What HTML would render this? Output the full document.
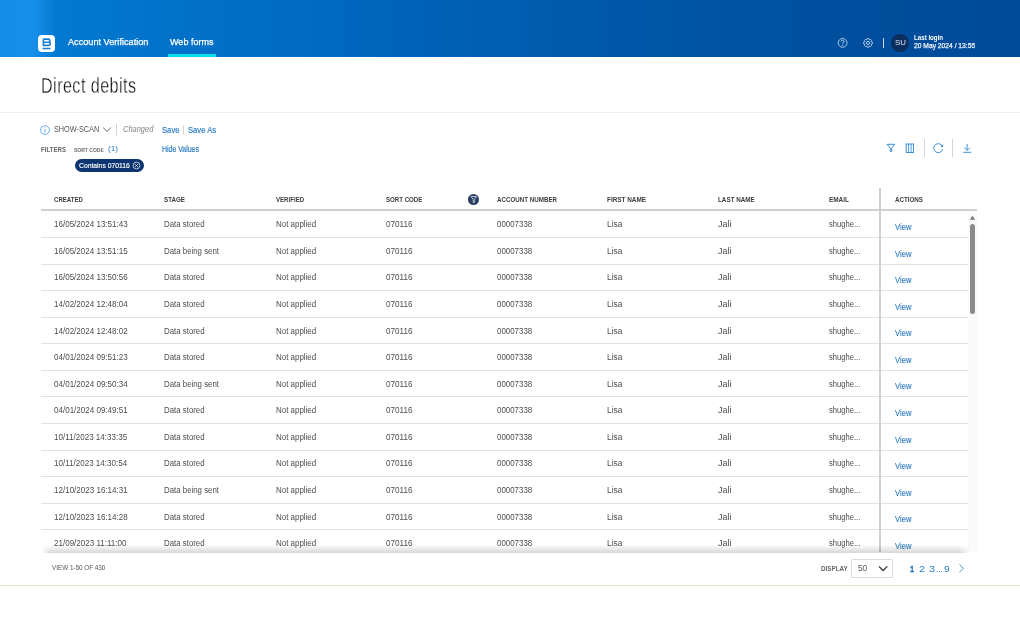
<!DOCTYPE html>
<html><head><meta charset="utf-8">
<style>
*{margin:0;padding:0;box-sizing:border-box}
html,body{width:1020px;height:638px;overflow:hidden;background:#fff;font-family:"Liberation Sans",sans-serif}
.a{position:absolute}
.t{position:absolute;white-space:nowrap;line-height:1;transform-origin:0 0}
#hdr{position:absolute;left:0;top:0;width:1020px;height:56.8px;
 background:linear-gradient(90deg,#148ce8 0px,#178fea 33px,#0479d1 56px,#0275cc 120px,#0068c0 330px,#0058a8 600px,#004e9e 850px,#004a98 1020px)}
#logo{position:absolute;left:37.5px;top:34.5px;width:17.1px;height:17.1px;background:#fff;border-radius:4px}
#ul{position:absolute;left:168.1px;top:53.9px;width:48px;height:2.9px;background:#06dfee}
#div1{position:absolute;left:0;top:112px;width:1020px;height:1px;background:#f0f0f0}
</style></head><body>
<div id="hdr">
 <div id="logo"><svg width="17.1" height="17.1" viewBox="0 0 17 17"><path d="M5.35 4.1H10.3A1.55 1.55 0 0 1 10.3 7.2H5.35M5.35 7.2H10.75A1.55 1.55 0 0 1 10.75 10.3H5.35V4.1" fill="none" stroke="#1a7fd8" stroke-width="1.6"/><rect x="4.5" y="12.7" width="8" height="1.5" fill="#1a7fd8"/></svg></div>
 <span class="t" style="left:68.36px;top:37.47px;font-size:9.6px;color:#fff;font-weight:normal;font-style:normal;transform:scaleX(0.954);-webkit-text-stroke:0.25px #fff">Account Verification</span>
 <span class="t" style="left:170.07px;top:37.29px;font-size:9.7px;color:#fff;font-weight:normal;font-style:normal;transform:scaleX(0.933);-webkit-text-stroke:0.25px #fff">Web forms</span>
 <div id="ul"></div>
 <svg class="a" style="left:836px;top:36px" width="14" height="14" viewBox="0 0 14 14"><circle cx="6.6" cy="6.9" r="4.4" fill="none" stroke="#c4d8f0" stroke-width="0.9"/><path d="M5.2 5.6A1.45 1.45 0 1 1 7.3 6.9C6.8 7.2 6.6 7.5 6.6 8.2" fill="none" stroke="#c4d8f0" stroke-width="0.9"/><circle cx="6.6" cy="9.5" r="0.55" fill="#c4d8f0"/></svg>
 <svg class="a" style="left:861px;top:36px" width="14" height="14" viewBox="0 0 14 14"><path d="M5.69 3.65 L6.16 2.58 L7.84 2.58 L8.31 3.65 L8.37 3.68 L9.46 3.25 L10.65 4.44 L10.22 5.53 L10.25 5.59 L11.32 6.06 L11.32 7.74 L10.25 8.21 L10.22 8.27 L10.65 9.36 L9.46 10.55 L8.37 10.12 L8.31 10.15 L7.84 11.22 L6.16 11.22 L5.69 10.15 L5.63 10.12 L4.54 10.55 L3.35 9.36 L3.78 8.27 L3.75 8.21 L2.68 7.74 L2.68 6.06 L3.75 5.59 L3.78 5.53 L3.35 4.44 L4.54 3.25 L5.63 3.68Z" fill="none" stroke="#c4d8f0" stroke-width="0.9" stroke-linejoin="round"/><circle cx="7" cy="6.9" r="1.6" fill="none" stroke="#c4d8f0" stroke-width="0.95"/></svg>
 <div class="a" style="left:882.5px;top:38.3px;width:0.9px;height:9.4px;background:#c4d8f0"></div>
 <div class="a" style="left:891.1px;top:33.7px;width:17.9px;height:17.9px;border-radius:50%;background:#0b2e5e"></div>
 <span class="t" style="left:894.89px;top:38.80px;font-size:7.8px;color:#dbe3ef;font-weight:normal;font-style:normal;transform:scaleX(1.015);">SU</span>
 <span class="t" style="left:913.75px;top:35.06px;font-size:6.9px;color:#fff;font-weight:bold;font-style:normal;transform:scaleX(0.895);">Last login</span>
 <span class="t" style="left:913.74px;top:42.22px;font-size:7.3px;color:#f2f6fb;font-weight:normal;font-style:normal;transform:scaleX(0.919);-webkit-text-stroke:0.25px #f2f6fb">20 May 2024 / 13:55</span>
</div>
<span class="t" style="left:40.83px;top:74.98px;font-size:22.0px;color:#111;font-weight:normal;font-style:normal;transform:scaleX(0.734);-webkit-text-stroke:0.35px #fff;letter-spacing:0.6px">Direct debits</span>
<div id="div1"></div>

<!-- toolbar -->
<svg class="a" style="left:39px;top:124px" width="12" height="12" viewBox="0 0 12 12"><circle cx="6" cy="6" r="4.4" fill="none" stroke="#5aa9ee" stroke-width="0.9"/><rect x="5.55" y="5" width="0.9" height="3.6" fill="#5aa9ee"/><circle cx="6" cy="3.7" r="0.55" fill="#5aa9ee"/></svg>
<span class="t" style="left:53.66px;top:125.17px;font-size:8.3px;color:#555;font-weight:normal;font-style:normal;transform:scaleX(0.878);">SHOW-SCAN</span>
<svg class="a" style="left:102px;top:126px" width="10" height="7" viewBox="0 0 10 7"><path d="M1.1 1.6L5 5.4 8.9 1.6" fill="none" stroke="#555" stroke-width="0.9"/></svg>
<div class="a" style="left:116.1px;top:123.9px;width:0.7px;height:11.7px;background:#d5d5d5"></div>
<span class="t" style="left:122.67px;top:124.92px;font-size:8.6px;color:#858585;font-weight:normal;font-style:italic;transform:scaleX(0.869);">Changed</span>
<span class="t" style="left:161.51px;top:125.12px;font-size:9.9px;color:#2f7cc4;font-weight:normal;font-style:normal;transform:scaleX(0.777);-webkit-text-stroke:0.2px #2f7cc4">Save</span>
<div class="a" style="left:183.2px;top:125px;width:0.7px;height:10px;background:#d5d5d5"></div>
<span class="t" style="left:188.01px;top:125.12px;font-size:9.9px;color:#2f7cc4;font-weight:normal;font-style:normal;transform:scaleX(0.775);-webkit-text-stroke:0.2px #2f7cc4">Save As</span>
<span class="t" style="left:40.86px;top:145.67px;font-size:7.0px;color:#666;font-weight:bold;font-style:normal;transform:scaleX(0.871);">FILTERS</span>
<span class="t" style="left:73.99px;top:146.54px;font-size:6.1px;color:#6a6a6a;font-weight:bold;font-style:normal;transform:scaleX(0.822);">SORT CODE</span>
<span class="t" style="left:108.05px;top:144.57px;font-size:7.6px;color:#2f7cc4;font-weight:normal;font-style:normal;transform:scaleX(1.091);">(1)</span>
<span class="t" style="left:161.88px;top:144.59px;font-size:8.4px;color:#2f7cc4;font-weight:normal;font-style:normal;transform:scaleX(0.830);-webkit-text-stroke:0.2px #2f7cc4">Hide Values</span>
<div class="a" style="left:74.6px;top:158.6px;width:69.5px;height:13.3px;border-radius:7px;background:#0b3470"></div>
<span class="t" style="left:78.53px;top:161.82px;font-size:7.3px;color:#fff;font-weight:normal;font-style:normal;transform:scaleX(0.930);-webkit-text-stroke:0.15px #fff">Contains 070116</span>
<svg class="a" style="left:132px;top:161.3px" width="9" height="9" viewBox="0 0 9 9"><circle cx="4.5" cy="4.5" r="3.4" fill="none" stroke="#fff" stroke-width="0.7"/><path d="M3.1 3.1L5.9 5.9M5.9 3.1L3.1 5.9" stroke="#fff" stroke-width="0.7"/></svg>

<!-- right icons -->
<svg class="a" style="left:884px;top:141px" width="14" height="14" viewBox="0 0 14 14"><path d="M3 3.3H10.7L7.7 7.2V10.6L6.3 10.6V7.2Z" fill="none" stroke="#3b8fd6" stroke-width="1" stroke-linejoin="round"/></svg>
<svg class="a" style="left:903px;top:141px" width="14" height="14" viewBox="0 0 14 14"><rect x="3.2" y="3" width="7.3" height="8.5" fill="none" stroke="#3b8fd6" stroke-width="1"/><path d="M5.6 3V11.5M8.1 3V11.5" stroke="#3b8fd6" stroke-width="0.9"/></svg>
<div class="a" style="left:923.6px;top:138.9px;width:0.9px;height:18.5px;background:#d6d6d6"></div>
<svg class="a" style="left:931px;top:141px" width="14" height="14" viewBox="0 0 14 14"><path d="M11.4 5.4A4.5 4.5 0 1 0 11.6 8.4" fill="none" stroke="#3b8fd6" stroke-width="1"/><path d="M12.2 3.6L11.9 6.6 9.4 5.2Z" fill="#3b8fd6"/></svg>
<div class="a" style="left:952px;top:138.9px;width:0.9px;height:18.5px;background:#d6d6d6"></div>
<svg class="a" style="left:960px;top:141px" width="14" height="14" viewBox="0 0 14 14"><path d="M7.1 3V9.3M4.3 6.6L7.1 9.4 9.9 6.6M3.2 11.3H11.2" fill="none" stroke="#3b8fd6" stroke-width="1"/></svg>

<!-- table -->
<div class="a" style="left:41px;top:208.7px;width:936px;height:2.4px;background:#cfcfcf"></div>
<span class="t" style="left:53.90px;top:195.65px;font-size:7.5px;color:#3d3d3d;font-weight:bold;font-style:normal;transform:scaleX(0.809);">CREATED</span><span class="t" style="left:164.49px;top:195.65px;font-size:7.5px;color:#3d3d3d;font-weight:bold;font-style:normal;transform:scaleX(0.832);">STAGE</span><span class="t" style="left:275.70px;top:195.65px;font-size:7.5px;color:#3d3d3d;font-weight:bold;font-style:normal;transform:scaleX(0.812);">VERIFIED</span><span class="t" style="left:386.00px;top:195.65px;font-size:7.5px;color:#3d3d3d;font-weight:bold;font-style:normal;transform:scaleX(0.814);">SORT CODE</span><span class="t" style="left:496.59px;top:195.65px;font-size:7.5px;color:#3d3d3d;font-weight:bold;font-style:normal;transform:scaleX(0.829);">ACCOUNT NUMBER</span><span class="t" style="left:607.17px;top:195.65px;font-size:7.5px;color:#3d3d3d;font-weight:bold;font-style:normal;transform:scaleX(0.851);">FIRST NAME</span><span class="t" style="left:718.38px;top:195.65px;font-size:7.5px;color:#3d3d3d;font-weight:bold;font-style:normal;transform:scaleX(0.842);">LAST NAME</span><span class="t" style="left:828.97px;top:195.65px;font-size:7.5px;color:#3d3d3d;font-weight:bold;font-style:normal;transform:scaleX(0.853);">EMAIL</span><span class="t" style="left:895.29px;top:195.65px;font-size:7.5px;color:#3d3d3d;font-weight:bold;font-style:normal;transform:scaleX(0.830);">ACTIONS</span>
<div class="a" style="left:468.2px;top:194.1px;width:11.1px;height:11.1px;border-radius:50%;background:#2a3d63"></div>
<svg class="a" style="left:468.2px;top:194.1px" width="11.1" height="11.1" viewBox="0 0 11 11"><path d="M3 2.5H8.6L6.3 5.3V8.5H5.2V5.3Z" fill="none" stroke="#c8cedb" stroke-width="0.9" stroke-linejoin="round"/></svg>
<div class="a" style="left:0;top:0;width:1020px;height:638px;overflow:hidden;clip-path:inset(211px 0 86.5px 0)">
<span class="t" style="left:53.69px;top:220.20px;font-size:8.5px;color:#4d4d4d;font-weight:normal;font-style:normal;transform:scaleX(0.945);">16/05/2024 13:51:43</span>
<span class="t" style="left:164.31px;top:220.20px;font-size:8.5px;color:#4d4d4d;font-weight:normal;font-style:normal;transform:scaleX(0.924);">Data stored</span>
<span class="t" style="left:275.70px;top:220.20px;font-size:8.5px;color:#4d4d4d;font-weight:normal;font-style:normal;transform:scaleX(0.934);">Not applied</span>
<span class="t" style="left:386.36px;top:220.20px;font-size:8.5px;color:#4d4d4d;font-weight:normal;font-style:normal;transform:scaleX(0.956);">070116</span>
<span class="t" style="left:496.87px;top:220.20px;font-size:8.5px;color:#4d4d4d;font-weight:normal;font-style:normal;transform:scaleX(0.932);">00007338</span>
<span class="t" style="left:607.06px;top:220.20px;font-size:8.5px;color:#4d4d4d;font-weight:normal;font-style:normal;transform:scaleX(0.983);">Lisa</span>
<span class="t" style="left:717.94px;top:220.20px;font-size:8.5px;color:#4d4d4d;font-weight:normal;font-style:normal;transform:scaleX(1.058);">Jali</span>
<span class="t" style="left:829.18px;top:220.20px;font-size:8.5px;color:#4d4d4d;font-weight:normal;font-style:normal;transform:scaleX(0.894);">shughe...</span>
<span class="t" style="left:894.90px;top:221.97px;font-size:9.6px;color:#2f7cc4;font-weight:normal;font-style:normal;transform:scaleX(0.795);-webkit-text-stroke:0.15px #2f7cc4">View</span>
<div class="a" style="left:41px;top:237.00px;width:927px;height:1px;background:#e2e2e2"></div>
<span class="t" style="left:53.69px;top:246.78px;font-size:8.5px;color:#4d4d4d;font-weight:normal;font-style:normal;transform:scaleX(0.945);">16/05/2024 13:51:15</span>
<span class="t" style="left:164.31px;top:246.78px;font-size:8.5px;color:#4d4d4d;font-weight:normal;font-style:normal;transform:scaleX(0.924);">Data being sent</span>
<span class="t" style="left:275.70px;top:246.78px;font-size:8.5px;color:#4d4d4d;font-weight:normal;font-style:normal;transform:scaleX(0.934);">Not applied</span>
<span class="t" style="left:386.36px;top:246.78px;font-size:8.5px;color:#4d4d4d;font-weight:normal;font-style:normal;transform:scaleX(0.956);">070116</span>
<span class="t" style="left:496.87px;top:246.78px;font-size:8.5px;color:#4d4d4d;font-weight:normal;font-style:normal;transform:scaleX(0.932);">00007338</span>
<span class="t" style="left:607.06px;top:246.78px;font-size:8.5px;color:#4d4d4d;font-weight:normal;font-style:normal;transform:scaleX(0.983);">Lisa</span>
<span class="t" style="left:717.94px;top:246.78px;font-size:8.5px;color:#4d4d4d;font-weight:normal;font-style:normal;transform:scaleX(1.058);">Jali</span>
<span class="t" style="left:829.18px;top:246.78px;font-size:8.5px;color:#4d4d4d;font-weight:normal;font-style:normal;transform:scaleX(0.894);">shughe...</span>
<span class="t" style="left:894.90px;top:248.55px;font-size:9.6px;color:#2f7cc4;font-weight:normal;font-style:normal;transform:scaleX(0.795);-webkit-text-stroke:0.15px #2f7cc4">View</span>
<div class="a" style="left:41px;top:263.58px;width:927px;height:1px;background:#e2e2e2"></div>
<span class="t" style="left:53.69px;top:273.36px;font-size:8.5px;color:#4d4d4d;font-weight:normal;font-style:normal;transform:scaleX(0.945);">16/05/2024 13:50:56</span>
<span class="t" style="left:164.31px;top:273.36px;font-size:8.5px;color:#4d4d4d;font-weight:normal;font-style:normal;transform:scaleX(0.924);">Data stored</span>
<span class="t" style="left:275.70px;top:273.36px;font-size:8.5px;color:#4d4d4d;font-weight:normal;font-style:normal;transform:scaleX(0.934);">Not applied</span>
<span class="t" style="left:386.36px;top:273.36px;font-size:8.5px;color:#4d4d4d;font-weight:normal;font-style:normal;transform:scaleX(0.956);">070116</span>
<span class="t" style="left:496.87px;top:273.36px;font-size:8.5px;color:#4d4d4d;font-weight:normal;font-style:normal;transform:scaleX(0.932);">00007338</span>
<span class="t" style="left:607.06px;top:273.36px;font-size:8.5px;color:#4d4d4d;font-weight:normal;font-style:normal;transform:scaleX(0.983);">Lisa</span>
<span class="t" style="left:717.94px;top:273.36px;font-size:8.5px;color:#4d4d4d;font-weight:normal;font-style:normal;transform:scaleX(1.058);">Jali</span>
<span class="t" style="left:829.18px;top:273.36px;font-size:8.5px;color:#4d4d4d;font-weight:normal;font-style:normal;transform:scaleX(0.894);">shughe...</span>
<span class="t" style="left:894.90px;top:275.13px;font-size:9.6px;color:#2f7cc4;font-weight:normal;font-style:normal;transform:scaleX(0.795);-webkit-text-stroke:0.15px #2f7cc4">View</span>
<div class="a" style="left:41px;top:290.16px;width:927px;height:1px;background:#e2e2e2"></div>
<span class="t" style="left:53.69px;top:299.94px;font-size:8.5px;color:#4d4d4d;font-weight:normal;font-style:normal;transform:scaleX(0.945);">14/02/2024 12:48:04</span>
<span class="t" style="left:164.31px;top:299.94px;font-size:8.5px;color:#4d4d4d;font-weight:normal;font-style:normal;transform:scaleX(0.924);">Data stored</span>
<span class="t" style="left:275.70px;top:299.94px;font-size:8.5px;color:#4d4d4d;font-weight:normal;font-style:normal;transform:scaleX(0.934);">Not applied</span>
<span class="t" style="left:386.36px;top:299.94px;font-size:8.5px;color:#4d4d4d;font-weight:normal;font-style:normal;transform:scaleX(0.956);">070116</span>
<span class="t" style="left:496.87px;top:299.94px;font-size:8.5px;color:#4d4d4d;font-weight:normal;font-style:normal;transform:scaleX(0.932);">00007338</span>
<span class="t" style="left:607.06px;top:299.94px;font-size:8.5px;color:#4d4d4d;font-weight:normal;font-style:normal;transform:scaleX(0.983);">Lisa</span>
<span class="t" style="left:717.94px;top:299.94px;font-size:8.5px;color:#4d4d4d;font-weight:normal;font-style:normal;transform:scaleX(1.058);">Jali</span>
<span class="t" style="left:829.18px;top:299.94px;font-size:8.5px;color:#4d4d4d;font-weight:normal;font-style:normal;transform:scaleX(0.894);">shughe...</span>
<span class="t" style="left:894.90px;top:301.71px;font-size:9.6px;color:#2f7cc4;font-weight:normal;font-style:normal;transform:scaleX(0.795);-webkit-text-stroke:0.15px #2f7cc4">View</span>
<div class="a" style="left:41px;top:316.74px;width:927px;height:1px;background:#e2e2e2"></div>
<span class="t" style="left:53.69px;top:326.52px;font-size:8.5px;color:#4d4d4d;font-weight:normal;font-style:normal;transform:scaleX(0.945);">14/02/2024 12:48:02</span>
<span class="t" style="left:164.31px;top:326.52px;font-size:8.5px;color:#4d4d4d;font-weight:normal;font-style:normal;transform:scaleX(0.924);">Data stored</span>
<span class="t" style="left:275.70px;top:326.52px;font-size:8.5px;color:#4d4d4d;font-weight:normal;font-style:normal;transform:scaleX(0.934);">Not applied</span>
<span class="t" style="left:386.36px;top:326.52px;font-size:8.5px;color:#4d4d4d;font-weight:normal;font-style:normal;transform:scaleX(0.956);">070116</span>
<span class="t" style="left:496.87px;top:326.52px;font-size:8.5px;color:#4d4d4d;font-weight:normal;font-style:normal;transform:scaleX(0.932);">00007338</span>
<span class="t" style="left:607.06px;top:326.52px;font-size:8.5px;color:#4d4d4d;font-weight:normal;font-style:normal;transform:scaleX(0.983);">Lisa</span>
<span class="t" style="left:717.94px;top:326.52px;font-size:8.5px;color:#4d4d4d;font-weight:normal;font-style:normal;transform:scaleX(1.058);">Jali</span>
<span class="t" style="left:829.18px;top:326.52px;font-size:8.5px;color:#4d4d4d;font-weight:normal;font-style:normal;transform:scaleX(0.894);">shughe...</span>
<span class="t" style="left:894.90px;top:328.29px;font-size:9.6px;color:#2f7cc4;font-weight:normal;font-style:normal;transform:scaleX(0.795);-webkit-text-stroke:0.15px #2f7cc4">View</span>
<div class="a" style="left:41px;top:343.32px;width:927px;height:1px;background:#e2e2e2"></div>
<span class="t" style="left:53.69px;top:353.10px;font-size:8.5px;color:#4d4d4d;font-weight:normal;font-style:normal;transform:scaleX(0.945);">04/01/2024 09:51:23</span>
<span class="t" style="left:164.31px;top:353.10px;font-size:8.5px;color:#4d4d4d;font-weight:normal;font-style:normal;transform:scaleX(0.924);">Data stored</span>
<span class="t" style="left:275.70px;top:353.10px;font-size:8.5px;color:#4d4d4d;font-weight:normal;font-style:normal;transform:scaleX(0.934);">Not applied</span>
<span class="t" style="left:386.36px;top:353.10px;font-size:8.5px;color:#4d4d4d;font-weight:normal;font-style:normal;transform:scaleX(0.956);">070116</span>
<span class="t" style="left:496.87px;top:353.10px;font-size:8.5px;color:#4d4d4d;font-weight:normal;font-style:normal;transform:scaleX(0.932);">00007338</span>
<span class="t" style="left:607.06px;top:353.10px;font-size:8.5px;color:#4d4d4d;font-weight:normal;font-style:normal;transform:scaleX(0.983);">Lisa</span>
<span class="t" style="left:717.94px;top:353.10px;font-size:8.5px;color:#4d4d4d;font-weight:normal;font-style:normal;transform:scaleX(1.058);">Jali</span>
<span class="t" style="left:829.18px;top:353.10px;font-size:8.5px;color:#4d4d4d;font-weight:normal;font-style:normal;transform:scaleX(0.894);">shughe...</span>
<span class="t" style="left:894.90px;top:354.87px;font-size:9.6px;color:#2f7cc4;font-weight:normal;font-style:normal;transform:scaleX(0.795);-webkit-text-stroke:0.15px #2f7cc4">View</span>
<div class="a" style="left:41px;top:369.90px;width:927px;height:1px;background:#e2e2e2"></div>
<span class="t" style="left:53.69px;top:379.68px;font-size:8.5px;color:#4d4d4d;font-weight:normal;font-style:normal;transform:scaleX(0.945);">04/01/2024 09:50:34</span>
<span class="t" style="left:164.31px;top:379.68px;font-size:8.5px;color:#4d4d4d;font-weight:normal;font-style:normal;transform:scaleX(0.924);">Data being sent</span>
<span class="t" style="left:275.70px;top:379.68px;font-size:8.5px;color:#4d4d4d;font-weight:normal;font-style:normal;transform:scaleX(0.934);">Not applied</span>
<span class="t" style="left:386.36px;top:379.68px;font-size:8.5px;color:#4d4d4d;font-weight:normal;font-style:normal;transform:scaleX(0.956);">070116</span>
<span class="t" style="left:496.87px;top:379.68px;font-size:8.5px;color:#4d4d4d;font-weight:normal;font-style:normal;transform:scaleX(0.932);">00007338</span>
<span class="t" style="left:607.06px;top:379.68px;font-size:8.5px;color:#4d4d4d;font-weight:normal;font-style:normal;transform:scaleX(0.983);">Lisa</span>
<span class="t" style="left:717.94px;top:379.68px;font-size:8.5px;color:#4d4d4d;font-weight:normal;font-style:normal;transform:scaleX(1.058);">Jali</span>
<span class="t" style="left:829.18px;top:379.68px;font-size:8.5px;color:#4d4d4d;font-weight:normal;font-style:normal;transform:scaleX(0.894);">shughe...</span>
<span class="t" style="left:894.90px;top:381.45px;font-size:9.6px;color:#2f7cc4;font-weight:normal;font-style:normal;transform:scaleX(0.795);-webkit-text-stroke:0.15px #2f7cc4">View</span>
<div class="a" style="left:41px;top:396.48px;width:927px;height:1px;background:#e2e2e2"></div>
<span class="t" style="left:53.69px;top:406.26px;font-size:8.5px;color:#4d4d4d;font-weight:normal;font-style:normal;transform:scaleX(0.945);">04/01/2024 09:49:51</span>
<span class="t" style="left:164.31px;top:406.26px;font-size:8.5px;color:#4d4d4d;font-weight:normal;font-style:normal;transform:scaleX(0.924);">Data stored</span>
<span class="t" style="left:275.70px;top:406.26px;font-size:8.5px;color:#4d4d4d;font-weight:normal;font-style:normal;transform:scaleX(0.934);">Not applied</span>
<span class="t" style="left:386.36px;top:406.26px;font-size:8.5px;color:#4d4d4d;font-weight:normal;font-style:normal;transform:scaleX(0.956);">070116</span>
<span class="t" style="left:496.87px;top:406.26px;font-size:8.5px;color:#4d4d4d;font-weight:normal;font-style:normal;transform:scaleX(0.932);">00007338</span>
<span class="t" style="left:607.06px;top:406.26px;font-size:8.5px;color:#4d4d4d;font-weight:normal;font-style:normal;transform:scaleX(0.983);">Lisa</span>
<span class="t" style="left:717.94px;top:406.26px;font-size:8.5px;color:#4d4d4d;font-weight:normal;font-style:normal;transform:scaleX(1.058);">Jali</span>
<span class="t" style="left:829.18px;top:406.26px;font-size:8.5px;color:#4d4d4d;font-weight:normal;font-style:normal;transform:scaleX(0.894);">shughe...</span>
<span class="t" style="left:894.90px;top:408.03px;font-size:9.6px;color:#2f7cc4;font-weight:normal;font-style:normal;transform:scaleX(0.795);-webkit-text-stroke:0.15px #2f7cc4">View</span>
<div class="a" style="left:41px;top:423.06px;width:927px;height:1px;background:#e2e2e2"></div>
<span class="t" style="left:53.69px;top:432.84px;font-size:8.5px;color:#4d4d4d;font-weight:normal;font-style:normal;transform:scaleX(0.945);">10/11/2023 14:33:35</span>
<span class="t" style="left:164.31px;top:432.84px;font-size:8.5px;color:#4d4d4d;font-weight:normal;font-style:normal;transform:scaleX(0.924);">Data stored</span>
<span class="t" style="left:275.70px;top:432.84px;font-size:8.5px;color:#4d4d4d;font-weight:normal;font-style:normal;transform:scaleX(0.934);">Not applied</span>
<span class="t" style="left:386.36px;top:432.84px;font-size:8.5px;color:#4d4d4d;font-weight:normal;font-style:normal;transform:scaleX(0.956);">070116</span>
<span class="t" style="left:496.87px;top:432.84px;font-size:8.5px;color:#4d4d4d;font-weight:normal;font-style:normal;transform:scaleX(0.932);">00007338</span>
<span class="t" style="left:607.06px;top:432.84px;font-size:8.5px;color:#4d4d4d;font-weight:normal;font-style:normal;transform:scaleX(0.983);">Lisa</span>
<span class="t" style="left:717.94px;top:432.84px;font-size:8.5px;color:#4d4d4d;font-weight:normal;font-style:normal;transform:scaleX(1.058);">Jali</span>
<span class="t" style="left:829.18px;top:432.84px;font-size:8.5px;color:#4d4d4d;font-weight:normal;font-style:normal;transform:scaleX(0.894);">shughe...</span>
<span class="t" style="left:894.90px;top:434.61px;font-size:9.6px;color:#2f7cc4;font-weight:normal;font-style:normal;transform:scaleX(0.795);-webkit-text-stroke:0.15px #2f7cc4">View</span>
<div class="a" style="left:41px;top:449.64px;width:927px;height:1px;background:#e2e2e2"></div>
<span class="t" style="left:53.69px;top:459.42px;font-size:8.5px;color:#4d4d4d;font-weight:normal;font-style:normal;transform:scaleX(0.945);">10/11/2023 14:30:54</span>
<span class="t" style="left:164.31px;top:459.42px;font-size:8.5px;color:#4d4d4d;font-weight:normal;font-style:normal;transform:scaleX(0.924);">Data stored</span>
<span class="t" style="left:275.70px;top:459.42px;font-size:8.5px;color:#4d4d4d;font-weight:normal;font-style:normal;transform:scaleX(0.934);">Not applied</span>
<span class="t" style="left:386.36px;top:459.42px;font-size:8.5px;color:#4d4d4d;font-weight:normal;font-style:normal;transform:scaleX(0.956);">070116</span>
<span class="t" style="left:496.87px;top:459.42px;font-size:8.5px;color:#4d4d4d;font-weight:normal;font-style:normal;transform:scaleX(0.932);">00007338</span>
<span class="t" style="left:607.06px;top:459.42px;font-size:8.5px;color:#4d4d4d;font-weight:normal;font-style:normal;transform:scaleX(0.983);">Lisa</span>
<span class="t" style="left:717.94px;top:459.42px;font-size:8.5px;color:#4d4d4d;font-weight:normal;font-style:normal;transform:scaleX(1.058);">Jali</span>
<span class="t" style="left:829.18px;top:459.42px;font-size:8.5px;color:#4d4d4d;font-weight:normal;font-style:normal;transform:scaleX(0.894);">shughe...</span>
<span class="t" style="left:894.90px;top:461.19px;font-size:9.6px;color:#2f7cc4;font-weight:normal;font-style:normal;transform:scaleX(0.795);-webkit-text-stroke:0.15px #2f7cc4">View</span>
<div class="a" style="left:41px;top:476.22px;width:927px;height:1px;background:#e2e2e2"></div>
<span class="t" style="left:53.69px;top:486.00px;font-size:8.5px;color:#4d4d4d;font-weight:normal;font-style:normal;transform:scaleX(0.945);">12/10/2023 16:14:31</span>
<span class="t" style="left:164.31px;top:486.00px;font-size:8.5px;color:#4d4d4d;font-weight:normal;font-style:normal;transform:scaleX(0.924);">Data being sent</span>
<span class="t" style="left:275.70px;top:486.00px;font-size:8.5px;color:#4d4d4d;font-weight:normal;font-style:normal;transform:scaleX(0.934);">Not applied</span>
<span class="t" style="left:386.36px;top:486.00px;font-size:8.5px;color:#4d4d4d;font-weight:normal;font-style:normal;transform:scaleX(0.956);">070116</span>
<span class="t" style="left:496.87px;top:486.00px;font-size:8.5px;color:#4d4d4d;font-weight:normal;font-style:normal;transform:scaleX(0.932);">00007338</span>
<span class="t" style="left:607.06px;top:486.00px;font-size:8.5px;color:#4d4d4d;font-weight:normal;font-style:normal;transform:scaleX(0.983);">Lisa</span>
<span class="t" style="left:717.94px;top:486.00px;font-size:8.5px;color:#4d4d4d;font-weight:normal;font-style:normal;transform:scaleX(1.058);">Jali</span>
<span class="t" style="left:829.18px;top:486.00px;font-size:8.5px;color:#4d4d4d;font-weight:normal;font-style:normal;transform:scaleX(0.894);">shughe...</span>
<span class="t" style="left:894.90px;top:487.77px;font-size:9.6px;color:#2f7cc4;font-weight:normal;font-style:normal;transform:scaleX(0.795);-webkit-text-stroke:0.15px #2f7cc4">View</span>
<div class="a" style="left:41px;top:502.80px;width:927px;height:1px;background:#e2e2e2"></div>
<span class="t" style="left:53.69px;top:512.58px;font-size:8.5px;color:#4d4d4d;font-weight:normal;font-style:normal;transform:scaleX(0.945);">12/10/2023 16:14:28</span>
<span class="t" style="left:164.31px;top:512.58px;font-size:8.5px;color:#4d4d4d;font-weight:normal;font-style:normal;transform:scaleX(0.924);">Data stored</span>
<span class="t" style="left:275.70px;top:512.58px;font-size:8.5px;color:#4d4d4d;font-weight:normal;font-style:normal;transform:scaleX(0.934);">Not applied</span>
<span class="t" style="left:386.36px;top:512.58px;font-size:8.5px;color:#4d4d4d;font-weight:normal;font-style:normal;transform:scaleX(0.956);">070116</span>
<span class="t" style="left:496.87px;top:512.58px;font-size:8.5px;color:#4d4d4d;font-weight:normal;font-style:normal;transform:scaleX(0.932);">00007338</span>
<span class="t" style="left:607.06px;top:512.58px;font-size:8.5px;color:#4d4d4d;font-weight:normal;font-style:normal;transform:scaleX(0.983);">Lisa</span>
<span class="t" style="left:717.94px;top:512.58px;font-size:8.5px;color:#4d4d4d;font-weight:normal;font-style:normal;transform:scaleX(1.058);">Jali</span>
<span class="t" style="left:829.18px;top:512.58px;font-size:8.5px;color:#4d4d4d;font-weight:normal;font-style:normal;transform:scaleX(0.894);">shughe...</span>
<span class="t" style="left:894.90px;top:514.35px;font-size:9.6px;color:#2f7cc4;font-weight:normal;font-style:normal;transform:scaleX(0.795);-webkit-text-stroke:0.15px #2f7cc4">View</span>
<div class="a" style="left:41px;top:529.38px;width:927px;height:1px;background:#e2e2e2"></div>
<span class="t" style="left:53.69px;top:539.16px;font-size:8.5px;color:#4d4d4d;font-weight:normal;font-style:normal;transform:scaleX(0.945);">21/09/2023 11:11:00</span>
<span class="t" style="left:164.31px;top:539.16px;font-size:8.5px;color:#4d4d4d;font-weight:normal;font-style:normal;transform:scaleX(0.924);">Data stored</span>
<span class="t" style="left:275.70px;top:539.16px;font-size:8.5px;color:#4d4d4d;font-weight:normal;font-style:normal;transform:scaleX(0.934);">Not applied</span>
<span class="t" style="left:386.36px;top:539.16px;font-size:8.5px;color:#4d4d4d;font-weight:normal;font-style:normal;transform:scaleX(0.956);">070116</span>
<span class="t" style="left:496.87px;top:539.16px;font-size:8.5px;color:#4d4d4d;font-weight:normal;font-style:normal;transform:scaleX(0.932);">00007338</span>
<span class="t" style="left:607.06px;top:539.16px;font-size:8.5px;color:#4d4d4d;font-weight:normal;font-style:normal;transform:scaleX(0.983);">Lisa</span>
<span class="t" style="left:717.94px;top:539.16px;font-size:8.5px;color:#4d4d4d;font-weight:normal;font-style:normal;transform:scaleX(1.058);">Jali</span>
<span class="t" style="left:829.18px;top:539.16px;font-size:8.5px;color:#4d4d4d;font-weight:normal;font-style:normal;transform:scaleX(0.894);">shughe...</span>
<span class="t" style="left:894.90px;top:540.93px;font-size:9.6px;color:#2f7cc4;font-weight:normal;font-style:normal;transform:scaleX(0.795);-webkit-text-stroke:0.15px #2f7cc4">View</span>
<div class="a" style="left:41px;top:555.96px;width:927px;height:1px;background:#e2e2e2"></div>
</div>
<div class="a" style="left:879.4px;top:188.2px;width:2px;height:363.5px;background:#cfcfcf"></div>
<!-- scrollbar -->
<div class="a" style="left:968.4px;top:211px;width:8.5px;height:340.5px;background:#fafafa"></div>
<svg class="a" style="left:968px;top:214px" width="9" height="7" viewBox="0 0 9 7"><path d="M1.8 5.7L4.5 1.8 7.2 5.7Z" fill="#777"/></svg>
<div class="a" style="left:970px;top:224px;width:4.9px;height:89.8px;border-radius:2.5px;background:#8a8a8a"></div>
<!-- bottom shadow -->
<div class="a" style="left:41px;top:545.3px;width:930px;height:7.4px;background:linear-gradient(rgba(0,0,0,0),rgba(0,0,0,0.16));-webkit-mask-image:linear-gradient(90deg,transparent 0,#000 10px,#000 918px,transparent 930px)"></div>

<span class="t" style="left:52.00px;top:564.42px;font-size:7.3px;color:#555;font-weight:normal;font-style:normal;transform:scaleX(0.865);">VIEW 1-50 OF 430</span>
<span class="t" style="left:820.85px;top:565.27px;font-size:7.0px;color:#666;font-weight:bold;font-style:normal;transform:scaleX(0.897);">DISPLAY</span>
<div class="a" style="left:851.3px;top:559.2px;width:41.6px;height:18.8px;border:0.7px solid #dcdcdc;border-radius:1px"></div>
<span class="t" style="left:857.52px;top:564.12px;font-size:8.6px;color:#555;font-weight:normal;font-style:normal;transform:scaleX(0.960);">50</span>
<svg class="a" style="left:876px;top:563px" width="14" height="10" viewBox="0 0 14 10"><path d="M2.9 3.4L7.1 7.5 11.3 3.4" fill="none" stroke="#333" stroke-width="1.3"/></svg>
<span class="t" style="left:909.62px;top:563.90px;font-size:9.8px;color:#1e6fb8;font-weight:bold;font-style:normal;transform:scaleX(0.758);-webkit-text-stroke:0.3px #1e6fb8">1</span><span class="t" style="left:918.64px;top:563.90px;font-size:9.8px;color:#2f7cc4;font-weight:normal;font-style:normal;transform:scaleX(1.111);">2</span><span class="t" style="left:928.64px;top:563.90px;font-size:9.8px;color:#2f7cc4;font-weight:normal;font-style:normal;transform:scaleX(1.111);">3</span><span class="t" style="left:936.31px;top:564.58px;font-size:9.0px;color:#2f7cc4;font-weight:normal;font-style:normal;transform:scaleX(0.917);">...</span><span class="t" style="left:944.48px;top:563.90px;font-size:9.8px;color:#2f7cc4;font-weight:normal;font-style:normal;transform:scaleX(1.044);">9</span>
<svg class="a" style="left:956px;top:563px" width="10" height="11" viewBox="0 0 10 11"><path d="M3.4 1.4L7.5 5.3 3.4 9.3" fill="none" stroke="#3b8fd6" stroke-width="0.9"/></svg>
<div class="a" style="left:0;top:584.6px;width:1020px;height:1.1px;background:#e4decf"></div>
</body></html>
